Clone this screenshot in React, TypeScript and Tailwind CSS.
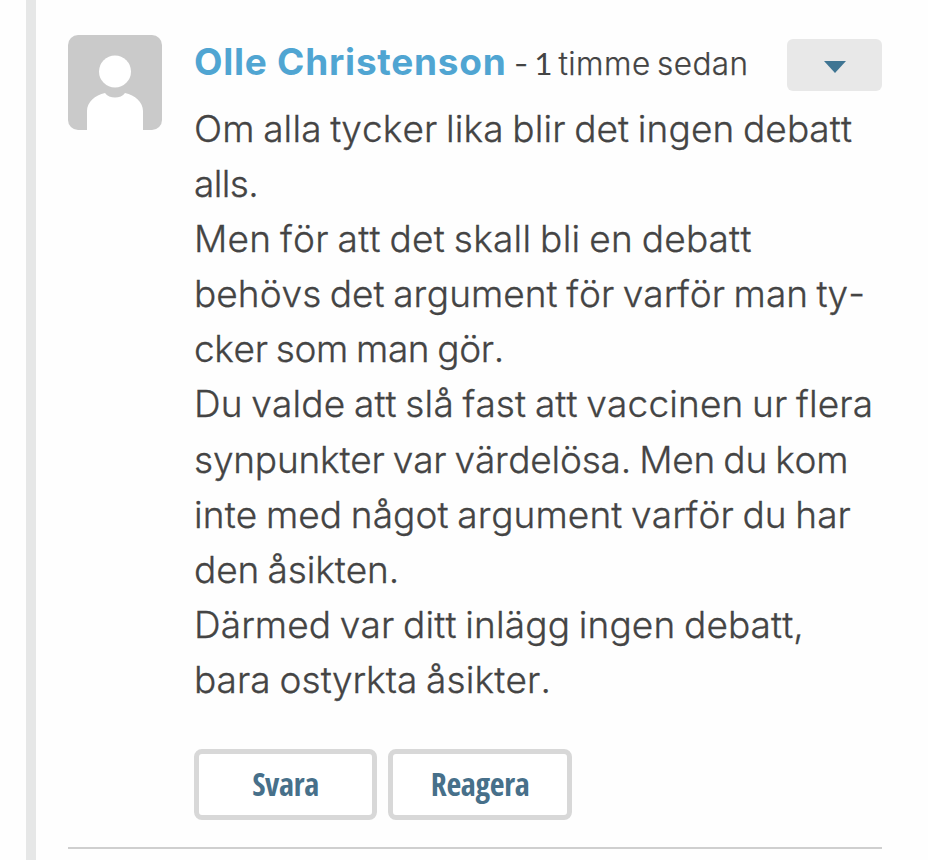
const lines = [
  { text: 'Om alla tycker lika blir det ingen debatt', spacing: 'tracking-[0.13px]' },
  { text: 'alls.', spacing: 'tracking-[-0.6px]' },
  { text: 'Men för att det skall bli en debatt', spacing: 'tracking-[0.28px]' },
  { text: 'behövs det argument för varför man ty-', spacing: 'tracking-[0.04px]' },
  { text: 'cker som man gör.', spacing: 'tracking-[-0.35px]' },
  { text: 'Du valde att slå fast att vaccinen ur flera', spacing: 'tracking-[0.16px]' },
  { text: 'synpunkter var värdelösa. Men du kom', spacing: 'tracking-[-0.2px]' },
  { text: 'inte med något argument varför du har', spacing: 'tracking-[0.12px]' },
  { text: 'den åsikten.', spacing: 'tracking-[-0.1px]' },
  { text: 'Därmed var ditt inlägg ingen debatt,', spacing: 'tracking-[0.16px]' },
  { text: 'bara ostyrkta åsikter.', spacing: 'tracking-[0.15px]' },
];

const Avatar = () => (
  <svg className="h-[95px] w-[94px] shrink-0" viewBox="0 0 94 95">
    <rect width="94" height="95" rx="10" fill="#cacaca" />
    <path d="M19 95V76C19 67 27 60 37 58C39 61 43 62.500 47 62.500C51 62.500 55 61 57 58C67 60 75 67 75 76V95Z" fill="#fff" />
    <circle cx="47" cy="36.500" r="16" fill="#fff" />
  </svg>
);

const ActionButton = ({ label, width }: { label: string; width: string }) => (
  <button
    className={`${width} h-[71px] rounded-[8px] border-[5px] border-[#d8d8d8] bg-white pb-0.5 font-['Open_Sans_Condensed','Open_Sans',sans-serif] text-[32px] font-bold tracking-[-0.3px] text-[#47708a] [font-stretch:75%]`}
  >
    {label}
  </button>
);

export default function App() {
  return (
    <main className="flex h-[860px] w-[928px] overflow-hidden bg-[#fefefe] pl-[26px] font-['Inter',sans-serif] text-[#444]">
      <div className="w-2.5 shrink-0 bg-[#e6e7e7]" />
      <article className="ml-8 mt-[35px] flex h-[814px] w-[814px] gap-8 border-b-2 border-[#cfcfcf]">
        <Avatar />
        <div className="min-w-0 flex-1">
          <header className="flex h-[66px] items-start whitespace-nowrap pt-1">
            <h2 className="w-[320px] text-[37px] leading-[46px] font-bold tracking-[0.75px] text-[#50a5d2]">Olle Christenson</h2>
            <span className="flex-1 text-[31.5px] leading-[49px] font-light tracking-[0.45px] [-webkit-text-stroke:0.25px_#444] [word-spacing:-3px]">
              -<span className="font-['Lato',sans-serif] font-normal [-webkit-text-stroke:0px]"> 1 </span>timme sedan
            </span>
            <button className="flex h-[52px] w-[95px] items-center justify-center rounded-[6px] bg-[#e8e8e8]" aria-label="Meny">
              <svg className="mt-1 h-3 w-[22px]" viewBox="0 0 22 12">
                <path d="M0 0H22L11 12Z" fill="#3f7593" />
              </svg>
            </button>
          </header>
          <div className="text-[37px] leading-[55.1px] font-light whitespace-nowrap [-webkit-text-stroke:0.3px_#444] [font-kerning:none] [font-variant-ligatures:none] [word-spacing:-2px]">
            {lines.map((line, index) => (
              <p key={index}><span className={line.spacing}>{line.text}</span></p>
            ))}
          </div>
          <div className="mt-[42px] flex gap-[11px]">
            <ActionButton label="Svara" width="w-[183px]" />
            <ActionButton label="Reagera" width="w-[184px]" />
          </div>
        </div>
      </article>
    </main>
  );
}
